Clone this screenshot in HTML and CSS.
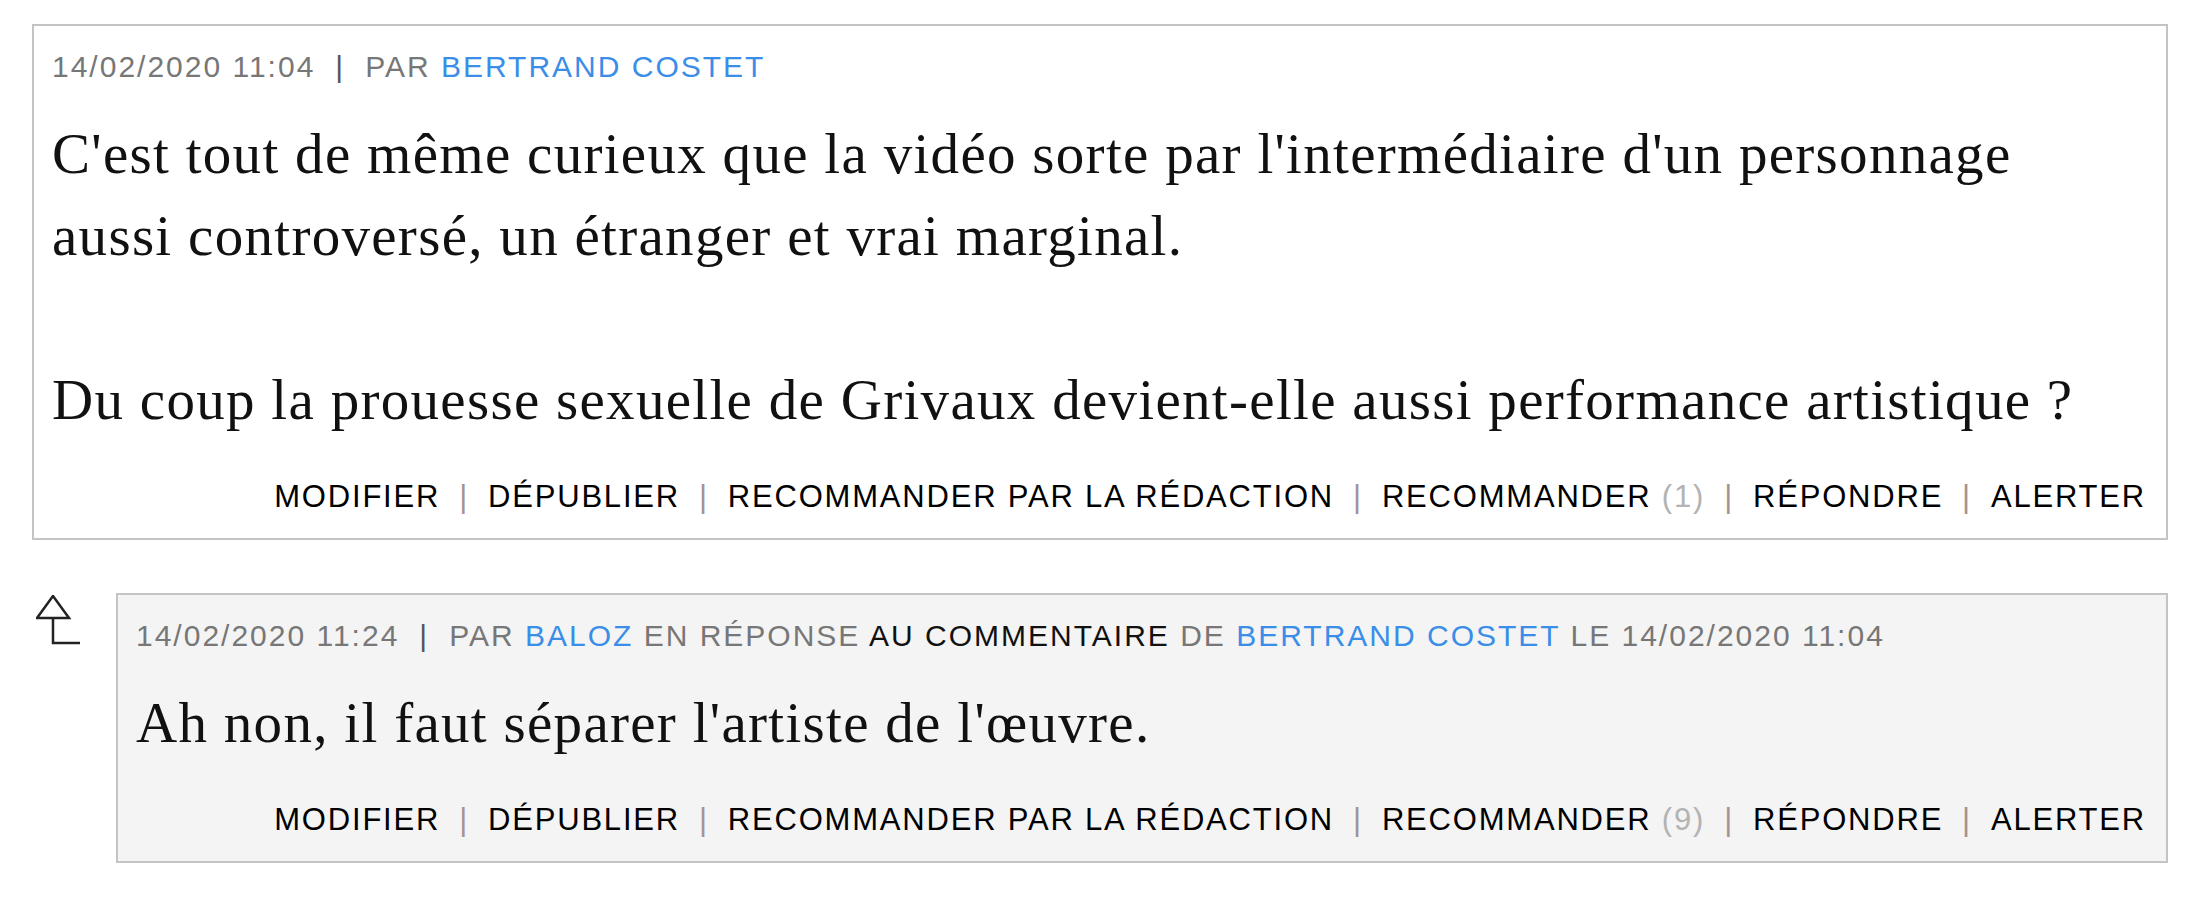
FILE: index.html
```html
<!DOCTYPE html>
<html lang="fr">
<head>
    <meta charset="UTF-8">
    <meta name="viewport" content="width=device-width, initial-scale=1.0">
    <title>Commentaires</title>
    <link rel="stylesheet" href="styles.css">
</head>
<body>
    <div class="thread">
        <div class="comment">
            <div class="meta"><span class="date">14/02/2020 11:04</span><span class="sep">|</span>PAR <a class="author" href="#">BERTRAND COSTET</a></div>
            <p class="text">C'est tout de même curieux que la vidéo sorte par l'intermédiaire d'un  personnage aussi controversé, un étranger et vrai marginal.<br><br>Du coup la prouesse sexuelle de Grivaux devient-elle aussi performance artistique ?</p>
            <div class="actions">
                <a href="#">MODIFIER</a><span class="sep">|</span>
                <a href="#">DÉPUBLIER</a><span class="sep">|</span>
                <a href="#">RECOMMANDER PAR LA RÉDACTION</a><span class="sep">|</span>
                <a href="#">RECOMMANDER <span class="count">(1)</span></a><span class="sep">|</span>
                <a href="#">RÉPONDRE</a><span class="sep">|</span>
                <a href="#">ALERTER</a>
            </div>
        </div>

        <div class="reply">
            <div class="reply-icon">
                <svg width="46" height="50" viewBox="0 0 46 50">
                    <path d="M17 1 L1 23 L33 23 Z" fill="none" stroke="#222" stroke-width="2.5" stroke-linejoin="miter"/>
                    <path d="M17 23 L17 48 L44 48" fill="none" stroke="#222" stroke-width="2.5"/>
                </svg>
            </div>
            <div class="comment comment-reply">
                <div class="meta"><span class="date">14/02/2020 11:24</span><span class="sep">|</span>PAR <a class="author" href="#">BALOZ</a> EN RÉPONSE <a class="parent" href="#">AU COMMENTAIRE</a> DE <a class="author" href="#">BERTRAND COSTET</a> LE 14/02/2020 11:04</div>
                <p class="text">Ah non, il faut séparer l'artiste de l'œuvre.</p>
                <div class="actions">
                    <a href="#">MODIFIER</a><span class="sep">|</span>
                    <a href="#">DÉPUBLIER</a><span class="sep">|</span>
                    <a href="#">RECOMMANDER PAR LA RÉDACTION</a><span class="sep">|</span>
                    <a href="#">RECOMMANDER <span class="count">(9)</span></a><span class="sep">|</span>
                    <a href="#">RÉPONDRE</a><span class="sep">|</span>
                    <a href="#">ALERTER</a>
                </div>
            </div>
        </div>
    </div>
</body>
</html>
```

FILE: styles.css
```css
body {
    margin: 0;
    background-color: #fff;
    font-family: "Liberation Sans", Arial, sans-serif;
    color: #111;
}
a {
    text-decoration: none;
    color: inherit;
}
.thread {
    padding: 24px 32px 0 32px;
}
.comment {
    border: 2px solid #c4c4c4;
    padding: 21px 20px 21px 18px;
    background-color: #fff;
}
.comment-reply {
    flex: 1;
    background-color: #f4f4f4;
}
.meta {
    font-size: 30px;
    line-height: 40px;
    letter-spacing: 2px;
    color: #777;
    white-space: nowrap;
}
.meta .sep {
    margin: 0 20px;
    color: #555;
}
.author {
    color: #3a8ee8;
}
.parent {
    color: #111;
}
.text {
    margin: 26px 0 0 0;
    font-family: "Liberation Serif", "Times New Roman", serif;
    font-size: 57px;
    line-height: 82px;
    letter-spacing: 1.3px;
    color: #111;
}
.actions {
    margin-top: 36px;
    display: flex;
    justify-content: flex-end;
    align-items: baseline;
    font-size: 31px;
    line-height: 40px;
    letter-spacing: 1.8px;
    color: #000;
    white-space: nowrap;
}
.actions .sep {
    margin: 0 19px;
    color: #a39393;
}
.count {
    color: #b3b3b3;
}
.reply {
    display: flex;
    margin-top: 53px;
}
.reply-icon {
    width: 84px;
    flex-shrink: 0;
    padding: 2px 0 0 4px;
    box-sizing: border-box;
}
```
